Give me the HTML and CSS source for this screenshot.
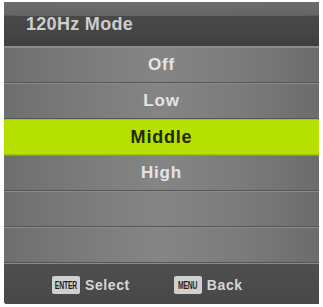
FILE: index.html
```html
<!DOCTYPE html>
<html>
<head>
<meta charset="utf-8">
<link rel="stylesheet" href="styles.css">
</head>
<body>
<div class="panel">
  <div class="header"><span class="title">120Hz Mode</span></div>
  <div class="list">
    <div class="row">Off</div>
    <div class="row">Low</div>
    <div class="row selected">Middle</div>
    <div class="row">High</div>
    <div class="row"></div>
    <div class="row"></div>
  </div>
  <div class="footer">
    <div class="hint"><span class="key"><span class="key-text">ENTER</span></span><span class="label">Select</span></div>
    <div class="hint second"><span class="key"><span class="key-text">MENU</span></span><span class="label">Back</span></div>
  </div>
</div>
</body>
</html>
```

FILE: styles.css
```css
html, body {
  margin: 0;
  padding: 0;
  background: #ffffff;
}
body {
  font-family: "Liberation Sans", Arial, sans-serif;
  font-weight: bold;
}
.panel {
  margin: 2px 0 0 4px;
  width: 315px;
  height: 302px;
  display: flex;
  flex-direction: column;
  background: #5a5a5a;
  border-bottom-left-radius: 3px;
  overflow: hidden;
}
.header {
  height: 45px;
  flex: none;
  display: flex;
  align-items: center;
  padding-left: 22px;
  background:
    radial-gradient(ellipse 190% 40% at 50% 0%, #6e6e6e 0%, #646464 80%, rgba(100,100,100,0) 82%),
    linear-gradient(to bottom, #4c4c4c 0%, #454545 70%, #3f3f3f 100%);
  border-bottom: 1px solid #8a8a8a;
  box-sizing: border-box;
}
.title {
  color: #cdcdcd;
  font-size: 18px;
  letter-spacing: 0.3px;
  margin-top: 1px;
}
.list {
  display: flex;
  flex-direction: column;
}
.row {
  height: 36px;
  box-sizing: border-box;
  display: flex;
  align-items: center;
  justify-content: center;
  color: #e4e4e4;
  font-size: 17px;
  letter-spacing: 0.8px;
  border-top: 1px solid #8c8c8c;
  border-bottom: 1px solid #555555;
  background: linear-gradient(to right, #6e6e6e 0%, #7b7b7b 25%, #858585 50%, #7b7b7b 75%, #6c6c6c 100%);
}
.row.selected {
  background: #b6e000;
  color: #222b00;
  border-top: 1px solid #a3cc00;
  border-bottom: 1px solid #9cc400;
  font-size: 18px;
}
.footer {
  flex: 1;
  display: flex;
  align-items: center;
  padding-left: 48px;
  padding-top: 2px;
  background: linear-gradient(to bottom, #4e4e4e 0%, #484848 100%);
  border-top: 1px solid #8a8a8a;
}
.hint {
  display: flex;
  align-items: center;
}
.hint.second {
  margin-left: 44px;
}
.key {
  display: flex;
  align-items: center;
  justify-content: center;
  width: 28px;
  height: 18px;
  box-sizing: border-box;
  background: #d0d0d0;
  border-radius: 2px;
  overflow: hidden;
}
.key-text {
  display: inline-block;
  color: #1e1e1e;
  font-family: "Liberation Sans", Arial, sans-serif;
  font-size: 11px;
  font-weight: bold;
  letter-spacing: -0.3px;
  transform: scaleX(0.62);
  white-space: nowrap;
}
.label {
  margin-left: 5px;
  color: #d6d6d6;
  font-size: 14px;
  letter-spacing: 0.6px;
}
```
